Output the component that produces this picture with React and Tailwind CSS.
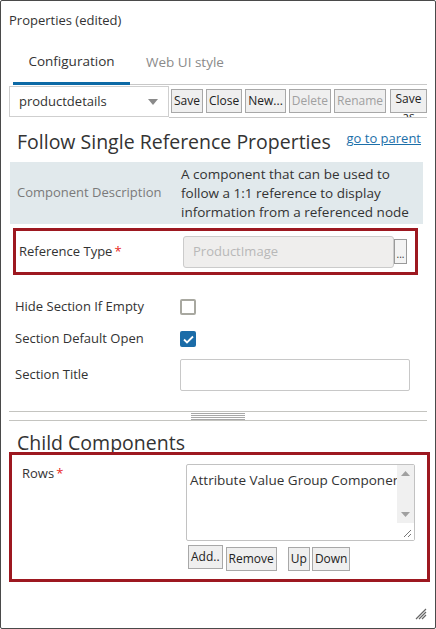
import React from 'react';

const font = { fontFamily: '"Open Sans", "Noto Sans", sans-serif' };

function ToolButton({ children, disabled }) {
  return (
    <button
      className={`h-[24px] px-[2px] bg-[#efefef] border border-[#a8a8a8] text-[12px] leading-[20px] ${
        disabled ? 'text-[#a0a0a0]' : 'text-[#222]'
      }`}
    >
      {children}
    </button>
  );
}

function Checkbox({ checked }) {
  if (checked) {
    return (
      <div className="w-[16px] h-[16px] rounded-[2px] bg-[#1b6ca8] flex items-center justify-center">
        <svg width="11" height="9" viewBox="0 0 11 9">
          <path d="M1 4.5 L4 7.5 L10 1.5" fill="none" stroke="white" strokeWidth="1.8" />
        </svg>
      </div>
    );
  }
  return <div className="w-[16px] h-[16px] rounded-[2px] border-2 border-[#a8a8a0] bg-white" />;
}

export default function App() {
  return (
    <div
      style={font}
      className="w-[436px] h-[629px] bg-white border border-[#4a4a4a] rounded-[2px] relative overflow-hidden text-[#333] box-border"
    >
      {/* TITLE */}
      <div className="pl-[8px] pt-[10px] text-[13px] leading-[18px]">Properties (edited)</div>

      {/* TABS */}
      <div className="flex items-end ml-[12px] mr-[8px] mt-[15px]">
        <div className="w-[117px] h-[41px] flex items-center justify-center border-b-[3px] border-[#0d6aa6] text-[13.5px] pb-[3px]">
          Configuration
        </div>
        <div className="flex-1 h-[41px] flex items-center border-b border-[#c8c8c8] pb-[4px]">
          <span className="ml-[16px] text-[13.5px] text-[#8a8a8a]">Web UI style</span>
        </div>
      </div>

      {/* TOOLBAR */}
      <div className="flex ml-[8px] mr-[8px]">
        <div className="mt-[1px] w-[160px] h-[31px] border border-[#cfcfcf] flex items-center justify-between pl-[9px] pr-[10px] text-[13px]">
          <span>productdetails</span>
          <svg width="10" height="6" viewBox="0 0 10 6">
            <path d="M0 0 L10 0 L5 6 Z" fill="#8a8a8a" />
          </svg>
        </div>
        <div className="flex-1 h-[33px] border-b border-[#c8c8c8] flex items-start gap-[3px] pt-[4px] pl-[2px] overflow-hidden">
          <ToolButton>Save</ToolButton>
          <ToolButton>Close</ToolButton>
          <ToolButton>New...</ToolButton>
          <ToolButton disabled>Delete</ToolButton>
          <ToolButton disabled>Rename</ToolButton>
          <button className="ml-[1px] w-[43px] h-[24px] bg-[#efefef] border border-[#a8a8a8] text-[12px] leading-[18px] text-[#222] flex flex-col items-center">
            <span>Save</span>
            <span>as</span>
          </button>
        </div>
      </div>

      {/* HEADING */}
      <div className="flex items-start justify-between pl-[16px] pr-[14px] mt-[10px]">
        <h1 className="text-[19.5px] leading-[28px]">Follow Single Reference Properties</h1>
        <a className="text-[13px] leading-[18px] text-[#1c6fa9] underline mt-[1px]">go to parent</a>
      </div>

      {/* DESCRIPTION */}
      <div className="mx-[9px] mr-[12px] mt-[6px] h-[62px] bg-[#e1e9ec] flex items-center">
        <div className="w-[171px] pl-[7px] text-[13px] text-[#7a7a7a]">Component Description</div>
        <div className="flex-1 pr-[6px] text-[13.5px] leading-[19px] text-[#333]">
          A component that can be used to follow a 1:1 reference to display information from a referenced node
        </div>
      </div>

      {/* REFERENCE TYPE */}
      <div className="ml-[12px] w-[405px] mt-[4px] h-[47px] border-[3px] border-[#9d1820] flex items-center">
        <div className="w-[167px] pl-[3px] text-[13px] flex">
          Reference Type<span className="text-[#e8281e] ml-[2px]">*</span>
        </div>
        <div className="w-[211px] h-[32px] bg-[#efeeed] border border-[#cbcbcb] rounded-[3px] flex items-center pl-[9px] text-[13px] text-[#b8b8b8]">
          ProductImage
        </div>
        <div className="w-[13px] h-[25px] border border-[#9a9a9a] bg-[#f3f3f3] text-[10px] leading-[28px] text-center">
          ...
        </div>
      </div>

      {/* CHECKBOX ROWS */}
      <div className="pl-[14px] mt-[16px] flex flex-col">
        <div className="flex items-center h-[32px]">
          <div className="w-[165px] text-[13px]">Hide Section If Empty</div>
          <Checkbox />
        </div>
        <div className="flex items-center h-[32px]">
          <div className="w-[165px] text-[13px]">Section Default Open</div>
          <Checkbox checked />
        </div>
        <div className="flex items-center h-[40px]">
          <div className="w-[165px] text-[13px]">Section Title</div>
          <div className="w-[230px] h-[32px] border border-[#c8c8c8] rounded-[2px]" />
        </div>
      </div>

      {/* SPLITTER */}
      <div className="mx-[8px] mr-[8px] mt-[16px] h-[10px] border-y border-[#c4c4c0] flex justify-center">
        <div className="w-[54px] flex flex-col gap-[1px] mt-[1px]">
          <div className="h-px bg-[#a8a8a8]" />
          <div className="h-px bg-[#a8a8a8]" />
          <div className="h-px bg-[#a8a8a8]" />
          <div className="h-px bg-[#a8a8a8]" />
        </div>
      </div>

      {/* CHILD COMPONENTS */}
      <h2 className="pl-[16px] mt-[9px] text-[19.5px] leading-[26px]">Child Components</h2>
      <div className="relative bg-white -mt-[4px] ml-[8px] w-[421px] h-[130px] border-[3px] border-[#9d1820] flex pt-[9px]">
        <div className="w-[174px] pl-[10px] text-[13px] flex items-start">
          Rows<span className="text-[#e8281e] ml-[2px]">*</span>
        </div>
        <div className="flex flex-col">
          <div className="w-[229px] h-[77px] border border-[#c2c2c2] rounded-[2px] flex">
            <div className="flex-1 pl-[3px] pt-[5px] text-[13.5px] whitespace-nowrap overflow-hidden">
              Attribute Value Group Component
            </div>
            <div className="w-[17px] flex flex-col bg-[#f0f0f0]">
              <div className="h-[17px] flex items-center justify-center">
                <svg width="9" height="5" viewBox="0 0 9 5">
                  <path d="M0 5 L9 5 L4.5 0 Z" fill="#a0a0a0" />
                </svg>
              </div>
              <div className="flex-1" />
              <div className="h-[17px] flex items-center justify-center">
                <svg width="9" height="5" viewBox="0 0 9 5">
                  <path d="M0 0 L9 0 L4.5 5 Z" fill="#a0a0a0" />
                </svg>
              </div>
              <div className="h-[17px] bg-white flex items-end justify-end p-[2px]">
                <svg width="10" height="10" viewBox="0 0 10 10">
                  <path d="M9 2 L2 9 M9 6 L6 9" stroke="#777" strokeWidth="1" />
                </svg>
              </div>
            </div>
          </div>
          <div className="flex mt-[4px] ml-[2px]">
            <ToolButton>Add..</ToolButton>
            <div className="ml-[3px]"><ToolButton>Remove</ToolButton></div>
            <div className="ml-[11px]"><ToolButton>Up</ToolButton></div>
            <div className="ml-[2px]"><ToolButton>Down</ToolButton></div>
          </div>
        </div>
      </div>

      {/* RESIZE GRIP */}
      <svg className="absolute right-[8px] bottom-[8px]" width="12" height="12" viewBox="0 0 12 12">
        <path d="M11 1 L1 11 M11 4 L4 11 M11 7 L7 11" stroke="#666" strokeWidth="1.2" />
      </svg>
    </div>
  );
}
